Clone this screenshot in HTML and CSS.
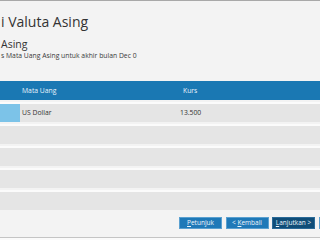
FILE: index.html
```html
<!DOCTYPE html>
<html>
<head>
<meta charset="utf-8">
<link rel="stylesheet" href="styles.css">
</head>
<body>
<div class="page">
  <header class="head">
    <h1 class="title">i Valuta Asing</h1>
    <h2 class="subtitle">Asing</h2>
    <p class="desc">s Mata Uang Asing untuk akhir bulan Dec 0</p>
  </header>
  <section class="grid">
    <div class="row hdr">
      <div class="cell sel"></div>
      <div class="cell c1">Mata Uang</div>
      <div class="cell c2">Kurs</div>
    </div>
    <div class="row">
      <div class="cell sel active"></div>
      <div class="cell c1">US Dollar</div>
      <div class="cell c2">13.500</div>
    </div>
    <div class="row"><div class="cell sel"></div><div class="cell c1"></div><div class="cell c2"></div></div>
    <div class="row"><div class="cell sel"></div><div class="cell c1"></div><div class="cell c2"></div></div>
    <div class="row"><div class="cell sel"></div><div class="cell c1"></div><div class="cell c2"></div></div>
    <div class="row"><div class="cell sel"></div><div class="cell c1"></div><div class="cell c2"></div></div>
  </section>
  <footer class="foot">
    <button class="btn"><u>P</u>etunjuk</button>
    <button class="btn">&lt; <u>K</u>embali</button>
    <button class="btn dark"><u>L</u>anjutkan &gt;</button>
    <button class="btn"></button>
  </footer>
</div>
</body>
</html>
```
FILE: styles.css
```css
html, body {
  margin: 0;
  padding: 0;
  width: 320px;
  height: 240px;
  overflow: hidden;
  background: #fafafa;
  font-family: "Open Sans", "Noto Sans", sans-serif;
  color: #333;
}
.page {
  height: 236px;
  border-top: 1px solid #a8a8a8;
  border-bottom: 1px solid #c4c4c4;
  background: #f3f3f3;
  display: flex;
  flex-direction: column;
  overflow: hidden;
}
.head {
  padding-left: 1px;
}
.title {
  margin: 11px 0 0 0;
  font-size: 14px;
  font-weight: 400;
  line-height: 19px;
  color: #333;
}
.subtitle {
  margin: 7px 0 0 0;
  font-size: 10.5px;
  font-weight: 400;
  line-height: 12px;
  color: #333;
}
.desc {
  margin: 1px 0 0 0;
  font-size: 6.8px;
  line-height: 10px;
  color: #3a3a3a;
}
.grid {
  margin-top: 20px;
  display: flex;
  flex-direction: column;
}
.row {
  display: grid;
  grid-template-columns: 20px 160px 1fr;
  height: 18px;
  margin-top: 4px;
  background: #e5e5e5;
  font-size: 6.8px;
  line-height: 18px;
  box-shadow: 0 -2px 0 #fbfbfb;
}
.row.hdr {
  margin-top: 0;
  height: 19px;
  line-height: 19px;
  background: #1a78b3;
  color: #e8f3fb;
  box-shadow: none;
}
.cell {
  padding-left: 2px;
  white-space: nowrap;
}
.c2 {
  padding-left: 0;
}
.hdr .c2 {
  padding-left: 3px;
}
.sel.active {
  background: #7cc3e8;
}
.foot {
  margin-top: auto;
  margin-bottom: 8px;
  display: flex;
  gap: 3.5px;
  padding-left: 179px;
  flex-wrap: nowrap;
}
.btn {
  flex: none;
  width: 43px;
  height: 12px;
  padding: 0;
  border: 1px solid #5aa0d0;
  background: #1f79b8;
  color: #eef6fc;
  font-family: "Open Sans", "Noto Sans", sans-serif;
  font-size: 6.5px;
  line-height: 10px;
  text-align: center;
}
.btn.dark {
  background: #0f4d78;
  border-color: #2a6a98;
}
.btn u {
  text-decoration-thickness: 0.5px;
}
```
